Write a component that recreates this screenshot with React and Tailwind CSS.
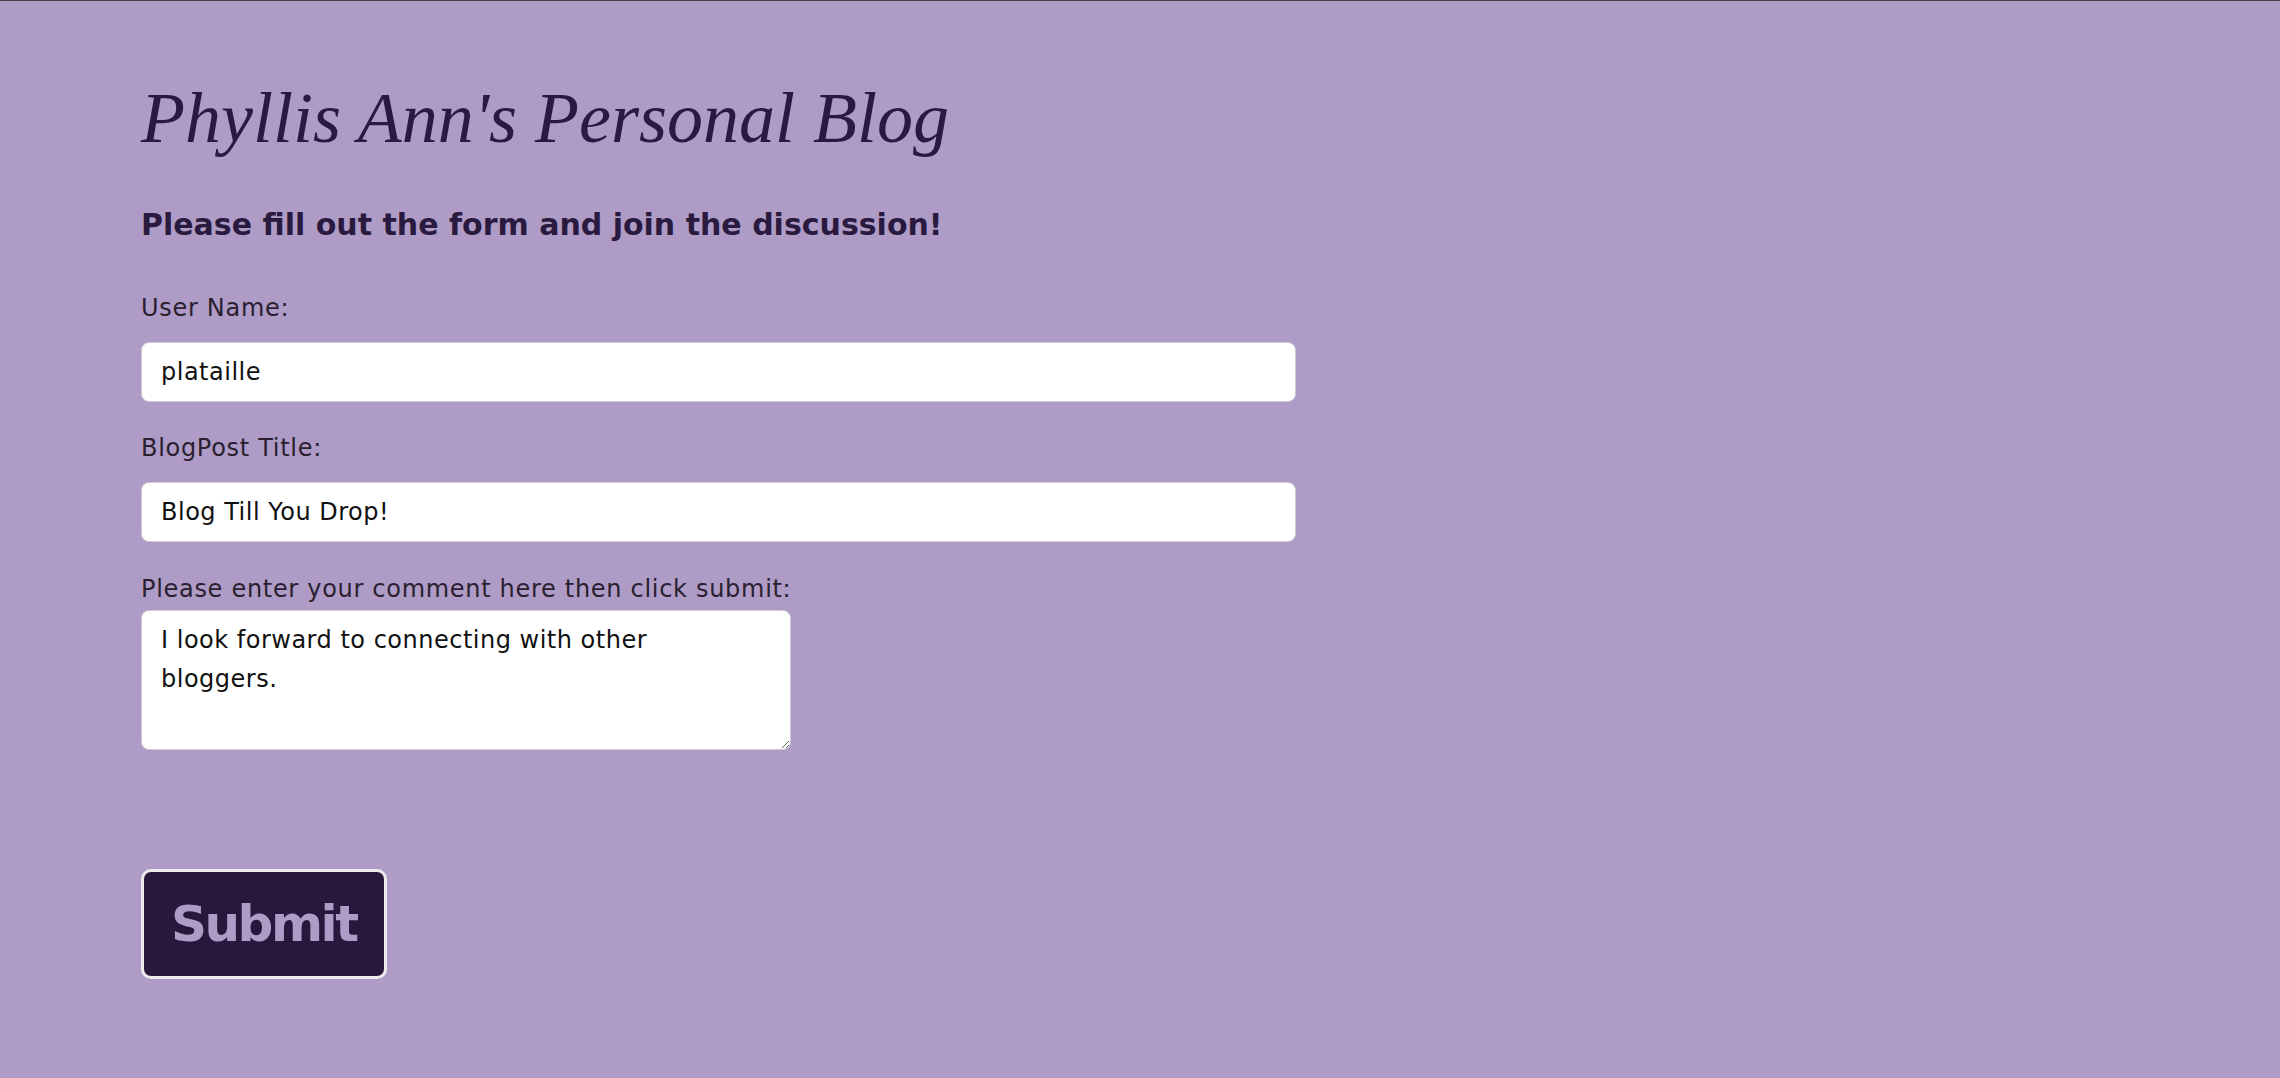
import { useState } from 'react'

const fields = [
  { id: 'username', label: 'User Name:', value: 'plataille' },
  { id: 'title', label: 'BlogPost Title:', value: 'Blog Till You Drop!' },
]

function Field({ id, label, value }) {
  const [text, setText] = useState(value)
  return (
    <div className="flex flex-col">
      <label htmlFor={id} className="text-[24px] leading-none tracking-[0.7px] text-[#2a2030]">
        {label}
      </label>
      <input
        id={id}
        type="text"
        value={text}
        onChange={(e) => setText(e.target.value)}
        className="mt-[22px] h-[60px] w-[1155px] rounded-lg border border-[#cfc8d6] bg-white px-[19px] text-[24px] tracking-[0.5px] text-[#111] outline-none"
      />
    </div>
  )
}

export default function App() {
  const [comment, setComment] = useState('I look forward to connecting with other bloggers.')

  return (
    <div
      className="min-h-screen border-t border-[#454545] bg-[#ae9cc6] pt-[81px] pl-[141px]"
      style={{ fontFamily: '"DejaVu Sans", sans-serif' }}
    >
      <h1
        className="text-[72px] leading-none font-normal italic text-[#2a1a3f]"
        style={{ fontFamily: '"Liberation Serif", serif' }}
      >
        Phyllis Ann's Personal Blog
      </h1>

      <h2 className="mt-[56px] text-[30px] leading-none font-bold text-[#2a1a3f]">
        Please fill out the form and join the discussion!
      </h2>

      <form className="mt-[56px] flex flex-col" onSubmit={(e) => e.preventDefault()}>
        <div className="flex flex-col gap-[34px]">
          {fields.map((f) => (
            <Field key={f.id} {...f} />
          ))}
        </div>

        <label htmlFor="comment" className="mt-[35px] text-[24px] leading-none tracking-[0.7px] text-[#2a2030]">
          Please enter your comment here then click submit:
        </label>
        <textarea
          id="comment"
          value={comment}
          onChange={(e) => setComment(e.target.value)}
          className="mt-[9px] h-[140px] w-[650px] rounded-lg border border-[#cfc8d6] bg-white px-[19px] pt-[10px] text-[24px] leading-[39px] tracking-[0.5px] text-[#111] outline-none"
        />

        <button
          type="submit"
          className="mt-[119px] h-[110px] w-fit rounded-[10px] border-[3px] border-[#ececec] bg-[#27183c] px-[27px] text-[50px] leading-none font-bold tracking-[-0.05em] text-[#ae9cc6]"
        >
          Submit
        </button>
      </form>
    </div>
  )
}
